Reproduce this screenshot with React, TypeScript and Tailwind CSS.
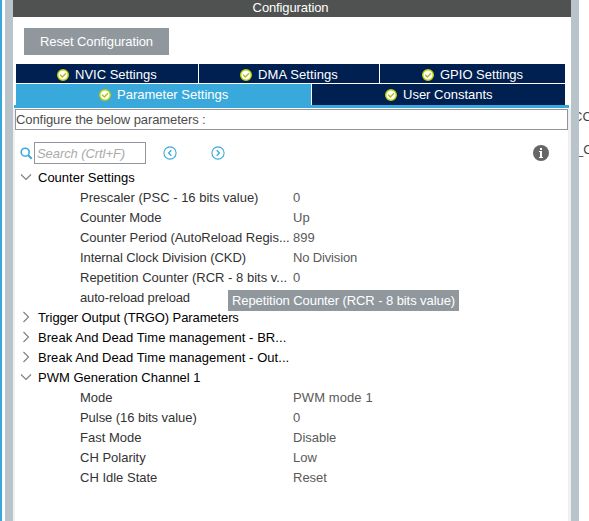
import type { ReactNode } from "react";

function CheckBadge() {
  return (
    <svg className="mr-[6px] h-3 w-3 shrink-0" viewBox="0 0 12 12" fill="none">
      <circle cx="6" cy="6" r="5.3" fill="#fff" stroke="#bccf00" strokeWidth="1.4" />
      <path d="M3.2 5.8 5.3 8 9 4.3" stroke="#a9bd1c" strokeWidth="1.3" />
    </svg>
  );
}

function Tab({ className, children }: { className: string; children: ReactNode }) {
  return (
    <div className={"flex items-center text-white " + className}>
      <CheckBadge />
      <span>{children}</span>
    </div>
  );
}

function Chevron({ open }: { open: boolean }) {
  return (
    <svg className="h-3 w-3 shrink-0" viewBox="0 0 12 12" fill="none" stroke="#7d7d7d" strokeWidth="1.1">
      <path d={open ? "M1 3.5 6 8.5 11 3.5" : "M3.5 1 8.5 6 3.5 11"} />
    </svg>
  );
}

function Group({ open = false, className = "", children }: { open?: boolean; className?: string; children: ReactNode }) {
  return (
    <div className="flex h-5 items-center pl-[5px] text-black">
      <Chevron open={open} />
      <span className={"ml-[6px] pt-0.5 " + className}>{children}</span>
    </div>
  );
}

function Row({ label, value = "", className = "", valueClass = "" }: { label: string; value?: string; className?: string; valueClass?: string }) {
  return (
    <div className="flex h-5 items-center pl-[65px] pt-0.5">
      <span className={"w-[213px] shrink-0 text-[#333] " + className}>{label}</span>
      <span className={"text-[#5a5a5a] " + valueClass}>{value}</span>
    </div>
  );
}

function Arrow({ d }: { d: string }) {
  return (
    <svg className="h-[14px] w-[14px]" viewBox="0 0 14 14" fill="none" stroke="#39a9dc">
      <circle cx="7" cy="7" r="6.1" strokeWidth="1.1" />
      <path d={d} strokeWidth="1.3" />
    </svg>
  );
}

export default function App() {
  return (
    <div className="relative flex h-[521px] w-[589px] overflow-hidden whitespace-nowrap bg-white font-['Liberation_Sans',Arial,sans-serif] text-[13px] leading-5">
      <div className="w-[2px] shrink-0 bg-[#39a9dc]" />
      <div className="ml-[3px] w-2 shrink-0 bg-[#b9c4ca]" />
      <div className="flex w-[558px] shrink-0 flex-col">
        <header className="flex h-[17px] items-center justify-center bg-[#4f5251] pb-px pr-[3px] text-white">
          <span className="tracking-[-0.12px]">Configuration</span>
        </header>
        <div className="pl-[11px] pt-[11px]">
          <button className="flex h-[27px] w-[145px] items-center justify-center bg-[#90989e] pt-px text-white">
            <span className="tracking-[-0.1px]">Reset Configuration</span>
          </button>
        </div>
        <nav className="mt-[9px] flex flex-col pl-[3px] pr-[6px]">
          <div className="flex h-[19px] gap-px">
            <Tab className="w-[182px] bg-[#002052] pl-[41px] pt-0.5">NVIC Settings</Tab>
            <Tab className="w-[180px] bg-[#002052] pl-[41px] pt-0.5 tracking-[0.1px]">DMA Settings</Tab>
            <Tab className="w-[185px] bg-[#002052] pl-[42px] pt-0.5">GPIO Settings</Tab>
          </div>
          <div className="mt-px flex h-[21px] gap-px">
            <Tab className="w-[295px] bg-[#39a9dc] pl-[83px]">Parameter Settings</Tab>
            <Tab className="w-[253px] bg-[#002052] pl-[73px]">User Constants</Tab>
          </div>
        </nav>
        <div className="ml-px mr-[2px] h-[3px] shrink-0 bg-[#39a9dc]" />
        <main className="flex-1 border-l-2 border-r-[3px] border-l-[#eef1f3] border-r-[#eef0f2] pt-px">
          <div className="flex h-[21px] items-center border border-[#90969c] text-[#4d4d4d]">
            <span className="tracking-[-0.08px]">Configure the below parameters :</span>
          </div>
          <div className="mt-3 flex h-[22px] items-center pl-[5px]">
            <svg className="h-[13px] w-[13px]" viewBox="0 0 13 13" fill="none" stroke="#39a9dc" strokeWidth="1.6">
              <circle cx="5.2" cy="5.2" r="4" />
              <path d="m8 8 3.7 3.7" strokeWidth="2" />
            </svg>
            <div className="ml-px flex h-[22px] w-[112px] items-center border border-[#90969c] pl-[2px] pt-px italic tracking-[-0.08px] text-[#aaa]">
              Search (Crtl+F)
            </div>
            <div className="ml-[17px] flex gap-[34px]">
              <Arrow d="M8.3 4.2 5.6 7 8.3 9.8" />
              <Arrow d="M5.7 4.2 8.4 7 5.7 9.8" />
            </div>
            <svg className="ml-[308px] h-4 w-4" viewBox="0 0 16 16">
              <circle cx="8" cy="8" r="8" fill="#666" />
              <path d="M7 3h2v2H7zM6 6h3v6h1v1H6v-1h1V7H6z" fill="#fff" />
            </svg>
          </div>
          <div className="mt-[3px]">
            <Group open>Counter Settings</Group>
            <Row label="Prescaler (PSC - 16 bits value)" value="0" />
            <Row label="Counter Mode" value="Up" className="tracking-[-0.08px]" />
            <Row label="Counter Period (AutoReload Regis..." value="899" className="tracking-[-0.04px]" />
            <Row label="Internal Clock Division (CKD)" value="No Division" className="tracking-[-0.08px]" valueClass="tracking-[-0.15px]" />
            <Row label="Repetition Counter (RCR - 8 bits v..." value="0" />
            <Row label="auto-reload preload" className="tracking-[-0.15px]" />
            <Group className="tracking-[-0.1px]">Trigger Output (TRGO) Parameters</Group>
            <Group className="tracking-[0.05px]">Break And Dead Time management - BR...</Group>
            <Group className="tracking-[0.05px]">Break And Dead Time management - Out...</Group>
            <Group open>PWM Generation Channel 1</Group>
            <Row label="Mode" value="PWM mode 1" valueClass="tracking-[0.1px]" />
            <Row label="Pulse (16 bits value)" value="0" className="tracking-[-0.05px]" />
            <Row label="Fast Mode" value="Disable" />
            <Row label="CH Polarity" value="Low" />
            <Row label="CH Idle State" value="Reset" />
          </div>
        </main>
      </div>
      <div className="w-2 shrink-0 bg-[#b9c4ca]" />
      <aside className="w-[10px] shrink-0 overflow-hidden pt-[107px] text-[13px] text-[#444]">
        <div className="-ml-[6px]">CC</div>
        <div className="-ml-[3px] mt-[13px]">_C</div>
      </aside>
      <div className="absolute left-[228px] top-[290px] flex h-[21px] w-[231px] items-center bg-[#90989e] pl-1 tracking-[-0.08px] text-white">
        Repetition Counter (RCR - 8 bits value)
      </div>
    </div>
  );
}
